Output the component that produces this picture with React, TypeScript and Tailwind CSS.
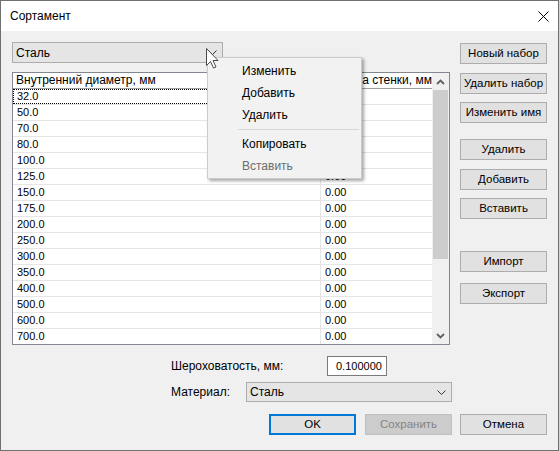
import React from 'react';

const ui = { fontFamily: '"Liberation Sans", Arial, sans-serif' };
const num = { fontFamily: '"Liberation Sans", Arial, sans-serif' };

const diameters = [
  '32.0', '50.0', '70.0', '80.0', '100.0', '125.0', '150.0', '175.0',
  '200.0', '250.0', '300.0', '350.0', '400.0', '500.0', '600.0', '700.0',
];

const Chevron: React.FC<{ color?: string }> = ({ color = '#333' }) => (
  <svg width="9" height="5" viewBox="0 0 9 5" className="block">
    <polyline points="0.5,0.5 4.5,4.5 8.5,0.5" fill="none" stroke={color} strokeWidth="1" />
  </svg>
);

const Btn: React.FC<{ label: string; className?: string; primary?: boolean; disabled?: boolean }> = ({
  label,
  className = '',
  primary,
  disabled,
}) => (
  <div
    className={`w-[87px] h-[21px] flex items-center justify-center text-[11.5px] whitespace-nowrap box-border ${
      disabled
        ? 'bg-[#cccccc] border border-[#bfbfbf] text-[#838383]'
        : primary
        ? 'bg-[#e1e1e1] border-2 border-[#0078d7] text-black'
        : 'bg-[#e1e1e1] border border-[#adadad] text-black'
    } ${className}`}
  >
    {label}
  </div>
);

const Combo: React.FC<{ value: string; className?: string }> = ({ value, className = '' }) => (
  <div
    className={`flex items-center justify-between bg-[#e5e5e5] border border-[#adadad] box-border pl-[3px] pr-[5px] text-[12px] ${className}`}
  >
    <span>{value}</span>
    <Chevron />
  </div>
);

const Grid: React.FC = () => (
  <div className="mt-[9px] w-[438px] h-[273px] border border-[#828790] bg-white flex box-border">
    <div className="w-[419px] flex flex-col">
      <div className="h-[16px] flex border-b border-[#a0a0a0] text-[12px] leading-[15px]">
        <div className="w-[308px] pl-[3px] border-r border-[#e5e5e5] whitespace-nowrap">Внутренний диаметр, мм</div>
        <div className="flex-1 pl-[4px] whitespace-nowrap">Толщина стенки, мм</div>
      </div>
      {diameters.map((d, i) => (
        <div
          key={d}
          className={`h-[16px] flex text-[11px] leading-[15px] ${i < diameters.length - 1 ? 'border-b border-[#e5e5e5]' : ''}`}
          style={num}
        >
          <div
            className={`w-[308px] pl-[4px] border-r border-[#e5e5e5] ${
              i === 0 ? 'outline outline-1 outline-dotted outline-black -outline-offset-1' : ''
            }`}
          >
            {d}
          </div>
          <div className="flex-1 pl-[4px]">0.00</div>
        </div>
      ))}
    </div>
    <div className="w-[17px] bg-[#f0f0f0] flex flex-col">
      <div className="h-[17px] flex items-center justify-center">
        <svg width="9" height="6" viewBox="0 0 9 6">
          <polyline points="1,5 4.5,1.5 8,5" fill="none" stroke="#606060" strokeWidth="1.8" />
        </svg>
      </div>
      <div className="h-[169px] mx-[1px] bg-[#cdcdcd]" />
      <div className="flex-1" />
      <div className="h-[17px] flex items-center justify-center">
        <svg width="9" height="6" viewBox="0 0 9 6">
          <polyline points="1,1 4.5,4.5 8,1" fill="none" stroke="#606060" strokeWidth="1.8" />
        </svg>
      </div>
    </div>
  </div>
);

const Menu: React.FC = () => (
  <div className="absolute left-[206px] top-[56px] w-[155px] h-[122px] bg-[#f2f2f2] border border-[#cccccc] shadow-[2px_2px_3px_rgba(0,0,0,0.35)] pt-[2px] text-[12px] box-border">
    {['Изменить', 'Добавить', 'Удалить'].map((t) => (
      <div key={t} className="h-[22px] flex items-center pl-[34px]">
        {t}
      </div>
    ))}
    <div className="h-[7px] flex items-center ml-[30px] mr-[2px]">
      <div className="h-px w-full bg-[#d7d7d7]" />
    </div>
    <div className="h-[22px] flex items-center pl-[34px]">Копировать</div>
    <div className="h-[22px] flex items-center pl-[34px] text-[#6d6d6d]">Вставить</div>
  </div>
);

const Cursor: React.FC = () => (
  <svg className="absolute left-[204px] top-[46px]" width="14" height="23" viewBox="0 0 14 23">
    <polygon
      points="1.5,1.5 1.5,18.5 5.5,14.5 8.5,21 11,20 8,13.5 13,13.5"
      fill="#ffffff"
      stroke="#4a4a4a"
      strokeWidth="1"
      strokeLinejoin="round"
    />
  </svg>
);

export default function App() {
  return (
    <div
      className="relative w-[559px] h-[451px] bg-[#f0f0f0] border border-[#707070] box-border text-black overflow-hidden"
      style={ui}
    >
      <div className="h-[30px] bg-white flex items-center justify-between pl-[9px] pr-[9px] text-[12px]">
        <span>Сортамент</span>
        <svg width="11" height="11" viewBox="0 0 11 11">
          <line x1="0.5" y1="0.5" x2="10.5" y2="10.5" stroke="#000" strokeWidth="1" />
          <line x1="10.5" y1="0.5" x2="0.5" y2="10.5" stroke="#000" strokeWidth="1" />
        </svg>
      </div>

      <div className="pl-[11px] pt-[11px]">
        <div className="flex">
          <div className="flex flex-col">
            <Combo value="Сталь" className="w-[211px] h-[21px]" />
            <Grid />
          </div>
          <div className="ml-[10px] flex flex-col">
            <Btn label="Новый набор" className="mt-[1px]" />
            <Btn label="Удалить набор" className="mt-[9px]" />
            <Btn label="Изменить имя" className="mt-[8px]" />
            <Btn label="Удалить" className="mt-[16px]" />
            <Btn label="Добавить" className="mt-[9px]" />
            <Btn label="Вставить" className="mt-[8px]" />
            <Btn label="Импорт" className="mt-[32px]" />
            <Btn label="Экспорт" className="mt-[11px]" />
          </div>
        </div>

        <div className="mt-[11px] flex items-center h-[20px] pl-[159px] text-[12px]">
          <span className="w-[156px]">Шероховатость, мм:</span>
          <div className="w-[60px] h-[20px] bg-white border border-[#7a7a7a] box-border flex items-center pl-[8px] text-[11px]" style={num}>
            0.100000
          </div>
        </div>

        <div className="mt-[6px] flex items-center h-[20px] pl-[159px] text-[12px]">
          <span className="w-[75px]">Материал:</span>
          <Combo value="Сталь" className="w-[206px] h-[20px]" />
        </div>

        <div className="mt-[12px] flex pl-[257px]">
          <Btn label="OK" primary />
          <Btn label="Сохранить" disabled className="ml-[9px]" />
          <Btn label="Отмена" className="ml-[8px]" />
        </div>
      </div>

      <Menu />
      <Cursor />
    </div>
  );
}
